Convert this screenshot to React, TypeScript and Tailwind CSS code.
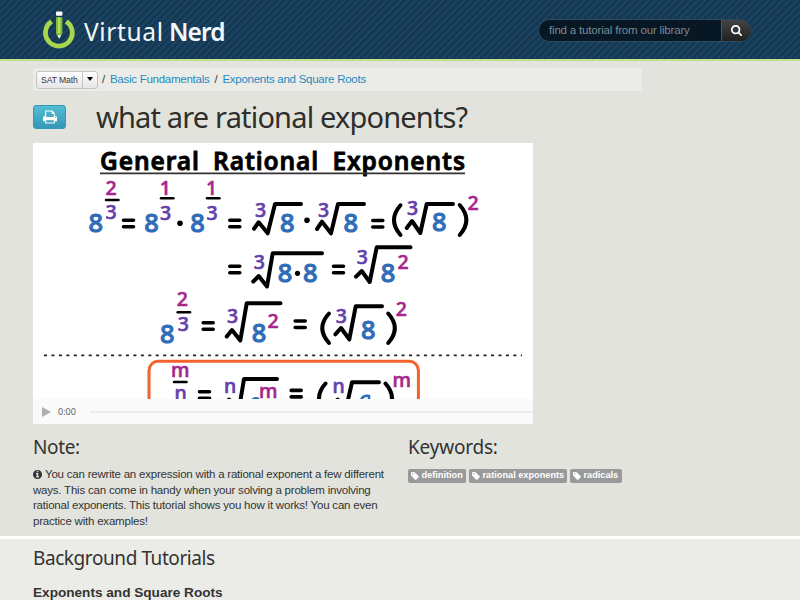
import React from 'react'

const BLUE = '#2f6db8'
const PINK = '#a6268c'
const PURPLE = '#6340ab'

type IconProps = { d: string; box: string; className?: string }

function Icon({ d, box, className }: IconProps) {
  return (
    <svg viewBox={box} className={className} fill="currentColor" aria-hidden="true">
      <path d={d} />
    </svg>
  )
}

const searchPath = 'M1152 832q0-185-131.5-316.5t-316.5-131.5-316.5 131.5-131.5 316.5 131.5 316.5 316.5 131.5 316.5-131.5 131.5-316.5zM1664 1664q0 52-38 90t-90 38q-54 0-90-38l-343-342q-179 124-399 124-143 0-273.5-55.5t-225-150-150-225-55.5-273.5 55.5-273.5 150-225 225-150 273.5-55.5 273.5 55.5 225 150 150 225 55.5 273.5q0 220-124 399l343 343q37 37 37 90z'
const printPath = 'M384 1536h896v-256h-896v256zM384 896h896v-384h-160q-40 0-68-28t-28-68v-160h-640v640zM1536 960q0-26-19-45t-45-19-45 19-19 45 19 45 45 19 45-19 19-45zM1664 960v416q0 13-9.5 22.5t-22.5 9.5h-224v160q0 40-28 68t-68 28h-960q-40 0-68-28t-28-68v-160h-224q-13 0-22.5-9.5t-9.5-22.5v-416q0-79 56.5-135.5t135.5-56.5h64v-544q0-40 28-68t68-28h672q40 0 88 20t76 48l152 152q28 28 48 76t20 88v256h64q79 0 135.5 56.5t56.5 135.5z'
const infoPath = 'M1024 1376v-160q0-14-9-23t-23-9h-96v-512q0-14-9-23t-23-9h-320q-14 0-23 9t-9 23v160q0 14 9 23t23 9h96v320h-96q-14 0-23 9t-9 23v160q0 14 9 23t23 9h448q14 0 23-9t9-23zM896 480v-160q0-14-9-23t-23-9h-192q-14 0-23 9t-9 23v160q0 14 9 23t23 9h192q14 0 23-9t9-23zM1536 896q0 209-103 385.5t-279.5 279.5-385.5 103-385.5-103-279.5-279.5-103-385.5 103-385.5 279.5-279.5 385.5-103 385.5 103 279.5 279.5 103 385.5z'
const tagPath = 'M448 448q0-53-37.5-90.5t-90.5-37.5-90.5 37.5-37.5 90.5 37.5 90.5 90.5 37.5 90.5-37.5 37.5-90.5zM1515 1024q0 53-37 90l-491 492q-39 37-91 37-53 0-90-37l-715-716q-38-37-64.5-101t-26.5-117v-416q0-52 38-90t90-38h416q53 0 117 26.5t102 64.5l715 714q37 39 37 91z'

// [character, centre x, baseline y, colour]
const bigDigits: [string, number, number][] = [
  ['8', 62.8, 89], ['8', 118.5, 89], ['8', 164.5, 89], ['8', 254.3, 89], ['8', 317.7, 89], ['8', 406.3, 87.5],
  ['8', 252, 139], ['8', 277.3, 139], ['8', 355, 139],
  ['8', 134.3, 200], ['8', 226, 198.5], ['8', 335.3, 196],
]

const smallDigits: [string, number, number, string][] = [
  ['2', 78.2, 52.3, PINK], ['3', 78, 76, PURPLE],
  ['1', 132.3, 52, PINK], ['3', 132.7, 76.5, PURPLE],
  ['1', 178.7, 52, PINK], ['3', 179, 76.5, PURPLE],
  ['3', 227.7, 74, PURPLE], ['3', 290.7, 73.7, PURPLE], ['3', 379.7, 72.3, PURPLE], ['2', 440, 67, PINK],
  ['3', 226.3, 125.7, PURPLE], ['3', 329.3, 121.3, PURPLE], ['2', 370, 125.7, PINK],
  ['2', 149.3, 163, PINK], ['3', 150.3, 188, PURPLE], ['3', 199.7, 180.3, PURPLE], ['2', 240, 185.3, PINK],
  ['3', 308.3, 180.3, PURPLE], ['2', 368.3, 173, PINK],
  ['m', 147.3, 233.7, PINK], ['n', 147.7, 257, PURPLE], ['n', 197, 250.3, PURPLE], ['m', 235.3, 254.7, PINK],
  ['n', 305.7, 249.7, PURPLE], ['m', 368.7, 243.7, PINK],
]

const equals: [number, number][] = [
  [90.5, 77.3], [196.8, 77.3], [339.8, 77.5],
  [196.8, 123.3], [300.5, 123.3],
  [170.2, 179.7], [262.2, 178],
  [166.5, 248.8], [258.2, 247.4],
]

const radicals = [
  '221,85.7 225.7,79.3 234.7,90.3 242,61 268,61',
  '284,86 289,78.7 298,90.3 305,61 331,61',
  '373.7,85 379,78 387.3,90 393.7,61 420,61',
  '220.3,138.5 225.7,133 234,143.5 239.7,110.3 289,110.3',
  '323,133.7 328.7,128 336.7,139 343.7,104.3 377.5,104.3',
  '193.7,193.5 199,187 207.3,197.5 213.7,160.3 247.5,160.3',
  '302.3,191.3 308,185 316.3,196.3 322.7,163.3 349,163.3',
  '190.5,262 196,256.5 206,266 211,236 244,236',
  '299,262 304.7,256.5 313,266 319,239.3 346,239.3',
]

const fractionBars = [
  'M73 57H85.5', 'M128 55.3H140.5', 'M174 55.3H186.5', 'M144.7 169.3H157', 'M141 239H153.5',
]

const parens = [
  'M367.5 62.3Q354.5 77 367.5 92', 'M426.7 62Q440 77 426.7 92',
  'M296 170.5Q282.5 185 296 200', 'M355.2 170.5Q368.5 185 355.2 200',
  'M292.5 240.5Q279.5 255 292.5 271', 'M352.5 240.5Q365.5 255 352.5 271',
]

function VideoFrame() {
  return (
    <svg width="500" height="256" viewBox="0 0 500 256" className="block bg-white">
      <g fontFamily="'Noto Sans', sans-serif" strokeLinejoin="round">
        <text x="67" y="26.5" fontSize="24.5" fontWeight="600" stroke="#000" strokeWidth="0.8" textLength="365" wordSpacing="6">
          General Rational Exponents
        </text>
        {bigDigits.map(([c, x, y]) => (
          <text key={`${x}-${y}`} x={x} y={y} fontSize="25.5" fontWeight="500" textAnchor="middle" fill={BLUE} stroke={BLUE} strokeWidth="1">{c}</text>
        ))}
        {smallDigits.map(([c, x, y, color]) => (
          <text key={`${x}-${y}`} x={x} y={y} fontSize="19.5" fontWeight="500" textAnchor="middle" fill={color} stroke={color} strokeWidth="0.6">{c}</text>
        ))}
      </g>
      <path d="M67 30.4H432" stroke="#333" strokeWidth="1.7" />
      <g fill="none" stroke="#000" strokeWidth="3.6" strokeLinecap="round" strokeLinejoin="round">
        {equals.map(([x, y]) => (
          <path key={`${x}-${y}`} d={`M${x} ${y}h10M${x} ${y + 6.5}h10`} />
        ))}
        {radicals.map((points) => (
          <polyline key={points} points={points} strokeWidth="4" />
        ))}
        {parens.map((d) => <path key={d} d={d} strokeWidth="4" />)}
        {fractionBars.map((d) => <path key={d} d={d} strokeWidth="2.5" />)}
      </g>
      <circle cx="147" cy="80.3" r="2.8" />
      <circle cx="274" cy="77.3" r="2.8" />
      <circle cx="264.5" cy="130.3" r="2.6" />
      <path d="M11 212.4H489" stroke="#222" strokeWidth="1.8" strokeDasharray="3 4.45" />
      <rect x="116" y="218.3" width="269.4" height="60" rx="9" fill="none" stroke="#f2622d" strokeWidth="3" />
      <path d="M219 257q3-3 7-1M328 257q2-5 8-4v4" fill="none" stroke={BLUE} strokeWidth="2.5" />
    </svg>
  )
}

function Logo() {
  return (
    <svg width="200" height="52" viewBox="0 0 200 52" className="block overflow-visible">
      <path d="M11.6 21.5A13.4 13.4 0 1 0 26.2 21.5" fill="none" stroke="#a8d64c" strokeWidth="4.8" />
      <path d="M14.8 11h8.4v24l-4.2 6-4.2-6z" fill="#15395a" />
      <rect x="16" y="11.5" width="6.4" height="4.3" rx="0.8" fill="#fff" />
      <path d="M16 17.2h6.4v16.3l-3.2 5-3.2-5z" fill="#84b93c" />
      <path d="M18 17.2h2.2v16H18z" fill="#b4e25a" />
      <path d="M17.3 35.3h3.8l-1.9 3.4z" fill="#eef7f4" />
      <g fill="#f4f7f9" fontFamily="'Noto Sans', sans-serif" fontSize="24.5">
        <text x="44" y="40.5" fontWeight="400" textLength="79">Virtual</text>
        <text x="129" y="40.5" fontWeight="600" textLength="56.5">Nerd</text>
      </g>
    </svg>
  )
}

function Header() {
  return (
    <header className="flex h-[61px] items-start justify-between border-b-2 border-[#c5e08a] bg-[#15395a] bg-[repeating-linear-gradient(135deg,#143852_0px,#143852_2px,#1b4361_3px,#1b4361_5px)] pl-10 pr-12">
      <Logo />
      <div className="mt-[19px] flex h-[23px] w-[214px] overflow-hidden rounded-full border border-[#2d4c62] bg-[#071824]">
        <div className="flex-1 pl-[10px] font-['Liberation_Sans',Arial,sans-serif] text-[11.5px] leading-[21px] tracking-[-0.18px] text-[#7d8a92]">
          find a tutorial from our library
        </div>
        <button className="flex w-[30px] items-center justify-center border-l border-[#555] bg-linear-to-b from-[#444] to-[#222] text-white">
          <Icon d={searchPath} box="0 128 1664 1664" className="h-[11px] w-[11px]" />
        </button>
      </div>
    </header>
  )
}

function Breadcrumb() {
  return (
    <nav className="flex h-[23px] w-[609px] items-center rounded-[3px] bg-[#ebece7] pl-[3px] text-[11.5px] leading-none tracking-[-0.26px]">
      <div className="flex h-[18px] w-[62px] rounded-[3px] border border-[#c4c4c4] bg-linear-to-b from-white to-[#e6e6e6] text-[8.6px] tracking-[-0.1px] text-[#333]">
        <span className="w-[46px] border-r border-[#c4c4c4] pl-[4px] leading-[17px]">SAT Math</span>
        <span className="ml-[4px] mt-[5px] h-0 w-0 border-x-[3px] border-t-[4px] border-x-transparent border-t-black" />
      </div>
      <span className="ml-1 mr-[5px]">/</span>
      <a className="text-[#1f8ac0]">Basic Fundamentals</a>
      <span className="mx-[5px]">/</span>
      <a className="text-[#1f8ac0]">Exponents and Square Roots</a>
    </nav>
  )
}

function Tag({ label, className }: { label: string; className: string }) {
  return (
    <span className={`flex h-[14px] items-center gap-[2.5px] rounded-[2px] bg-[#999] pl-[3px] text-[9.2px] font-bold leading-none text-white ${className}`}>
      <Icon d={tagPath} box="0 128 1536 1536" className="h-2 w-2 shrink-0" />
      {label}
    </span>
  )
}

function App() {
  return (
    <div className="h-[600px] w-[800px] overflow-hidden bg-[#e2e3dd] font-['Liberation_Sans',Arial,sans-serif] text-[#333]">
      <Header />
      <main className="h-[475px] px-[33px] pt-[7px]">
        <Breadcrumb />
        <div className="flex h-[52px] items-center">
          <button className="flex h-6 w-[33px] items-center justify-center rounded-[3px] border border-[#3299b5] bg-linear-to-b from-[#52bcd5] to-[#3399b5] text-white">
            <Icon d={printPath} box="0 64 1664 1664" className="h-[14px] w-[14px]" />
          </button>
          <h1 className="ml-[30px] whitespace-nowrap font-['Noto_Sans',sans-serif] text-[29px] leading-10 tracking-[-0.83px] text-[#2e2f2b]">
            what are rational exponents?
          </h1>
        </div>
        <section className="h-[281px] w-[500px] bg-[#fafafa]">
          <VideoFrame />
          <div className="flex h-[25px] items-center pl-[9px]">
            <span className="h-0 w-0 border-y-[5.5px] border-l-[9px] border-y-transparent border-l-[#b0b0b0]" />
            <span className="ml-[7px] w-[32px] font-['Open_Sans',sans-serif] text-[9px] text-[#555]">0:00</span>
            <span className="h-[2px] flex-1 bg-[#ececec]" />
          </div>
        </section>
        <div className="flex pt-[9px]">
          <section className="w-[375px]">
            <h3 className="font-['Noto_Sans',sans-serif] text-[19px] leading-7 tracking-[-0.35px]">Note:</h3>
            <p className="mt-[6px] whitespace-nowrap text-[11.5px] leading-[15.6px] tracking-[-0.21px]">
              <Icon d={infoPath} box="0 128 1536 1536" className="mr-[3px] inline-block h-[9px] w-[9px] align-[-1px]" />
              You can rewrite an expression with a rational exponent a few different<br />
              ways. This can come in handy when your solving a problem involving<br />
              rational exponents. This tutorial shows you how it works! You can even<br />
              practice with examples!
            </p>
          </section>
          <section>
            <h3 className="font-['Noto_Sans',sans-serif] text-[19px] leading-7 tracking-[-0.2px]">Keywords:</h3>
            <div className="mt-2 flex gap-[3px]">
              <Tag label="definition" className="w-[58px]" />
              <Tag label="rational exponents" className="w-[98px]" />
              <Tag label="radicals" className="w-[52px]" />
            </div>
          </section>
        </div>
      </main>
      <section className="h-16 border-t-[3px] border-white bg-[#ebece7] px-[33px] pt-[5px]">
        <h3 className="font-['Noto_Sans',sans-serif] text-[19px] leading-7 tracking-[-0.42px]">Background Tutorials</h3>
        <h4 className="mt-[13px] text-[13.6px] font-bold leading-4">Exponents and Square Roots</h4>
      </section>
    </div>
  )
}

export default App
